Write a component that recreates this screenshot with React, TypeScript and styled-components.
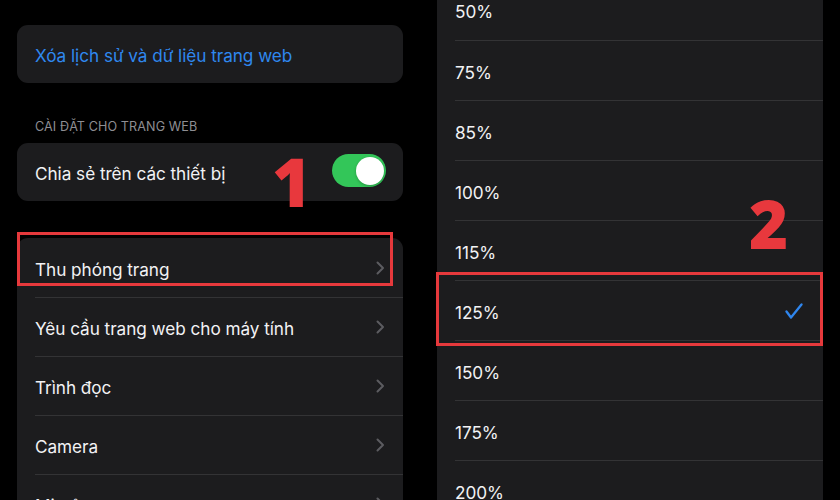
import React from "react";
import styled, { createGlobalStyle } from "styled-components";

const GlobalStyle = createGlobalStyle`
  html, body { margin: 0; padding: 0; background: #000; }
  * { box-sizing: border-box; }
`;

const Screen = styled.div`
  position: relative;
  width: 840px;
  height: 500px;
  overflow: hidden;
  background: #000;
  display: flex;
  font-family: Inter, "Noto Sans", sans-serif;
  -webkit-font-smoothing: antialiased;
`;

const LeftPane = styled.div`
  width: 420px;
  display: flex;
  flex-direction: column;
`;

const RightPane = styled.div`
  width: 420px;
  padding: 0 17px;
  display: flex;
  flex-direction: column;
`;

const TopEdge = styled.div`
  height: 2px;
  background: #1c1c1e;
`;

const Card = styled.div<{ $mt: number }>`
  margin: ${(p) => p.$mt}px 17px 0;
  background: #1c1c1e;
  border-radius: 11px;
  overflow: hidden;
  flex-shrink: 0;
`;

const ZoomCard = styled.div`
  margin-top: -20px;
  background: #1c1c1e;
  flex-shrink: 0;
`;

const SingleRow = styled.div`
  height: 58px;
  padding: 2px 17px 0 18px;
  display: flex;
  align-items: center;
  justify-content: space-between;
`;

const Row = styled.div`
  padding-left: 18px;
`;

const RowInner = styled.div<{ $first?: boolean; $h: number }>`
  height: ${(p) => p.$h}px;
  padding: 3px 18px 0 0;
  display: flex;
  align-items: center;
  justify-content: space-between;
  border-top: ${(p) => (p.$first ? "none" : "1px solid #333335")};
`;

const Label = styled.span<{ $blue?: boolean }>`
  font-size: 17.2px;
  letter-spacing: -0.05px;
  color: ${(p) => (p.$blue ? "#2f88ee" : "#f2f2f4")};
  white-space: nowrap;
`;

const SectionHeader = styled.div`
  margin: 36px 0 8px 35px;
  height: 16px;
  line-height: 16px;
  font-size: 12.6px;
  color: #8e8e93;
  letter-spacing: 0.1px;
`;

const Toggle = styled.div`
  width: 54px;
  height: 33px;
  border-radius: 17px;
  background: #33c659;
  display: flex;
  align-items: center;
  justify-content: flex-end;
  padding-right: 2.5px;
  margin-top: -5px;
`;

const Knob = styled.div`
  width: 28px;
  height: 28px;
  border-radius: 50%;
  background: #fff;
  box-shadow: 0 1px 3px rgba(0, 0, 0, 0.25);
`;

const Highlight = styled.div<{ $l: number; $t: number; $w: number; $h: number }>`
  position: absolute;
  left: ${(p) => p.$l}px;
  top: ${(p) => p.$t}px;
  width: ${(p) => p.$w}px;
  height: ${(p) => p.$h}px;
  border: 3px solid #e6393c;
  pointer-events: none;
`;

const StepNumber = styled.div<{ $l: number; $t: number }>`
  position: absolute;
  left: ${(p) => p.$l}px;
  top: ${(p) => p.$t}px;
  font-family: "Open Sans", "DejaVu Sans", sans-serif;
  font-weight: 800;
  font-size: 67px;
  line-height: 1;
  color: #e8383d;
`;

const Chevron = () => (
  <svg width="9" height="14" viewBox="0 0 9 14" style={{ marginTop: -3 }}>
    <path d="M1.5 1.5L7 7l-5.5 5.5" fill="none" stroke="#5c5c60" strokeWidth="2" strokeLinecap="round" strokeLinejoin="round" />
  </svg>
);

const Check = () => (
  <svg width="18" height="16" viewBox="0 0 18 16" style={{ marginRight: 2, marginTop: -3 }}>
    <path d="M1.5 8.5L6 14.5 16.5 1.5" fill="none" stroke="#2f86ee" strokeWidth="2.3" strokeLinecap="round" strokeLinejoin="round" />
  </svg>
);

const siteRows = [
  "Thu phóng trang",
  "Yêu cầu trang web cho máy tính",
  "Trình đọc",
  "Camera",
  "Micrô",
];

const zoomRows = ["50%", "75%", "85%", "100%", "115%", "125%", "150%", "175%", "200%"];

export default function App() {
  return (
    <>
      <GlobalStyle />
      <Screen>
        <LeftPane>
          <TopEdge />
          <Card $mt={25}>
            <SingleRow>
              <Label $blue>Xóa lịch sử và dữ liệu trang web</Label>
            </SingleRow>
          </Card>
          <SectionHeader>CÀI ĐẶT CHO TRANG WEB</SectionHeader>
          <Card $mt={0}>
            <SingleRow>
              <Label>Chia sẻ trên các thiết bị</Label>
              <Toggle>
                <Knob />
              </Toggle>
            </SingleRow>
          </Card>
          <Card $mt={37}>
            {siteRows.map((r, i) => (
              <Row key={r}>
                <RowInner $first={i === 0} $h={59}>
                  <Label>{r}</Label>
                  <Chevron />
                </RowInner>
              </Row>
            ))}
          </Card>
        </LeftPane>
        <RightPane>
          <ZoomCard>
            {zoomRows.map((r, i) => (
              <Row key={r}>
                <RowInner $first={i === 0} $h={60}>
                  <Label>{r}</Label>
                  {r === "125%" && <Check />}
                </RowInner>
              </Row>
            ))}
          </ZoomCard>
        </RightPane>
        <Highlight $l={17} $t={232} $w={376} $h={54} />
        <Highlight $l={436} $t={272} $w={387} $h={74} />
        <StepNumber $l={272} $t={148}>1</StepNumber>
        <StepNumber $l={749} $t={190}>2</StepNumber>
      </Screen>
    </>
  );
}
